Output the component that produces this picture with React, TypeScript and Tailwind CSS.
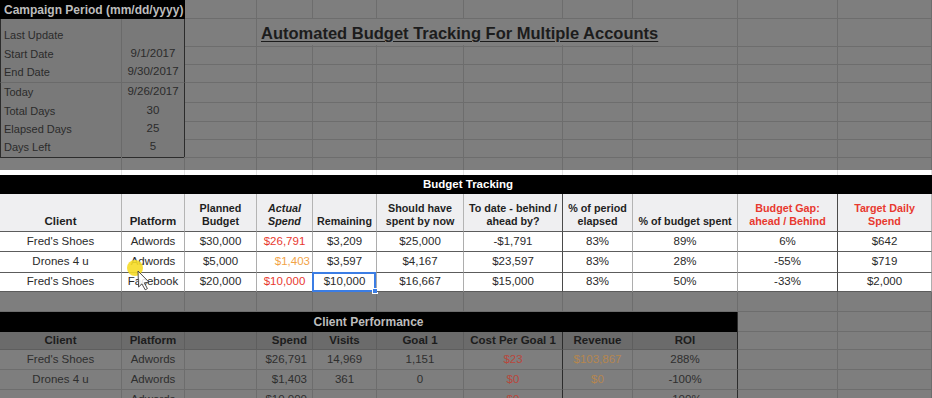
import type { ReactNode } from "react";

/*
  Google-Sheets style budget tracker. The active "Budget Tracking" block is
  shown at full brightness; the rest of the sheet is dimmed as in the video.
*/

const COLS =
  "grid grid-cols-[122px_63px_72px_56px_64px_87px_99px_70px_105px_100px_94px]";

// dimmed sheet gridline cell
const dimCell = "border-r border-b border-[#6d6d6d]";

function DimBlanks({ n }: { n: number }) {
  return (
    <>
      {Array.from({ length: n }, (_, i) => (
        <div key={i} className={dimCell} />
      ))}
    </>
  );
}

const CAMPAIGN: { label: string; value: string; h: string }[] = [
  { label: "Last Update", value: "", h: "h-[26px]" },
  { label: "Start Date", value: "9/1/2017", h: "h-[18px]" },
  { label: "End Date", value: "9/30/2017", h: "h-[20px]" },
  { label: "Today", value: "9/26/2017", h: "h-[19px]" },
  { label: "Total Days", value: "30", h: "h-[18px]" },
  { label: "Elapsed Days", value: "25", h: "h-[18px]" },
  { label: "Days Left", value: "5", h: "h-[19px]" },
];

const RED = "text-[#e8392f]";
const DARK_R = "border-r-[#4a4a4a]";

const BT_HEAD: { label: ReactNode; cls?: string }[] = [
  { label: "Client", cls: "text-[11.5px]" },
  { label: "Platform", cls: "text-[11.5px]" },
  { label: <>Planned<br />Budget</> },
  { label: <>Actual<br />Spend</>, cls: "italic" },
  { label: "Remaining" },
  { label: <>Should have<br />spent by now</> },
  { label: <>To date - behind /<br />ahead by?</>, cls: DARK_R },
  { label: <>% of period<br />elapsed</> },
  { label: "% of budget spent" },
  { label: <>Budget Gap:<br />ahead / Behind</>, cls: `${RED} ${DARK_R}` },
  { label: <>Target Daily<br />Spend</>, cls: RED },
];

type Val = { v: string; cls?: string };

const BT_ROWS: { h: string; cells: Val[] }[] = [
  {
    h: "h-[20px]",
    cells: [
      { v: "Fred's Shoes" }, { v: "Adwords" }, { v: "$30,000" },
      { v: "$26,791", cls: RED }, { v: "$3,209" }, { v: "$25,000" },
      { v: "-$1,791" }, { v: "83%" }, { v: "89%" }, { v: "6%" }, { v: "$642" },
    ],
  },
  {
    h: "h-[21px]",
    cells: [
      { v: "Drones 4 u" }, { v: "Adwords" }, { v: "$5,000" },
      { v: "$1,403", cls: "text-[#f2a348] !justify-end pr-[2px]" },
      { v: "$3,597" }, { v: "$4,167" }, { v: "$23,597" }, { v: "83%" },
      { v: "28%" }, { v: "-55%" }, { v: "$719" },
    ],
  },
  {
    h: "h-[19px]",
    cells: [
      { v: "Fred's Shoes" }, { v: "Facebook" }, { v: "$20,000" },
      { v: "$10,000", cls: RED }, { v: "$10,000" }, { v: "$16,667" },
      { v: "$15,000" }, { v: "83%" }, { v: "50%" }, { v: "-33%" }, { v: "$2,000" },
    ],
  },
];

const CP_RED = "text-[#b9473c]";
const CP_ORANGE = "text-[#b5864f]";
const CP_DARK = "border-r-[#2c2c2c]";

const CP_HEAD: { label: string; cls?: string }[] = [
  { label: "Client" },
  { label: "Platform" },
  { label: "" },
  { label: "Spend", cls: "!justify-end pr-[5px]" },
  { label: "Visits" },
  { label: "Goal 1" },
  { label: "Cost Per Goal 1", cls: CP_DARK },
  { label: "Revenue" },
  { label: "ROI", cls: CP_DARK },
];

const CP_ROWS: Val[][] = [
  [
    { v: "Fred's Shoes" }, { v: "Adwords" }, { v: "" },
    { v: "$26,791", cls: "!justify-end pr-[5px]" }, { v: "14,969" },
    { v: "1,151" }, { v: "$23", cls: `${CP_RED} ${CP_DARK}` },
    { v: "$103,867", cls: CP_ORANGE }, { v: "288%", cls: CP_DARK },
  ],
  [
    { v: "Drones 4 u" }, { v: "Adwords" }, { v: "" },
    { v: "$1,403", cls: "!justify-end pr-[5px]" }, { v: "361" },
    { v: "0" }, { v: "$0", cls: `${CP_RED} ${CP_DARK}` },
    { v: "$0", cls: CP_ORANGE }, { v: "-100%", cls: CP_DARK },
  ],
  [
    { v: "" }, { v: "Adwords" }, { v: "" },
    { v: "$10,000", cls: "!justify-end pr-[5px]" }, { v: "" },
    { v: "" }, { v: "$0", cls: `${CP_RED} ${CP_DARK}` },
    { v: "" }, { v: "-100%", cls: CP_DARK },
  ],
];

// screen-recording mouse pointer with its yellow click halo
function Cursor() {
  return (
    <svg
      className="pointer-events-none absolute left-[127px] top-[84px]"
      width="28"
      height="38"
      viewBox="0 0 28 38"
      aria-hidden
    >
      <circle cx="8" cy="14" r="8" fill="#f6dc26" fillOpacity="0.9" />
      <path
        d="M11 17 L11.6 33 L14.9 29.9 L18.2 35.8 L20.4 34.6 L17.3 28.8 L22 28.2 Z"
        fill="#fff"
        fillOpacity="0.85"
        stroke="#3a3a3a"
        strokeWidth="0.9"
        strokeLinejoin="round"
      />
    </svg>
  );
}

export default function App() {
  return (
    <div className="h-[398px] w-[932px] overflow-hidden bg-[#7e7e7e] font-['Liberation_Sans',Arial,sans-serif] text-[#2a2a2a]">
      {/* top, dimmed: campaign period + title */}
      <div className="text-[11px]">
        <div className={`${COLS} h-[19px]`}>
          <div className="col-span-2 flex items-center bg-black pl-[4px] text-[12px] font-bold whitespace-nowrap text-[#bdbdbd]">
            Campaign Period (mm/dd/yyyy)
          </div>
          <DimBlanks n={9} />
        </div>
        {CAMPAIGN.map((r, i) => (
          <div key={r.label} className={`${COLS} ${r.h}`}>
            <div
              className={`flex items-end border-r border-b border-l border-[#6a6a6a] border-l-[#2c2c2c] bg-[#797979] pb-[2px] pl-[3px] text-[#2b2b2b] ${
                i === CAMPAIGN.length - 1 ? "border-b-[#2c2c2c]" : ""
              }`}
            >
              {r.label}
            </div>
            <div
              className={`flex items-end justify-center border-r border-b border-[#6a6a6a] border-r-[#2c2c2c] bg-[#797979] pb-[2px] text-[11.5px] text-[#2b2b2b] ${
                i === CAMPAIGN.length - 1 ? "border-b-[#2c2c2c]" : ""
              }`}
            >
              {r.value}
            </div>
            <div className={dimCell} />
            {i === 0 ? (
              <>
                <div className="col-span-6 flex items-center border-r border-b border-[#6d6d6d] pl-[4px] pt-[2px] text-[16.5px] font-bold whitespace-nowrap text-[#1c1c1c] underline decoration-1 underline-offset-2">
                  Automated Budget Tracking For Multiple Accounts
                </div>
                <DimBlanks n={2} />
              </>
            ) : (
              <DimBlanks n={8} />
            )}
          </div>
        ))}
        <div className={`${COLS} h-[13px]`}>
          {Array.from({ length: 11 }, (_, i) => (
            <div key={i} className="border-r border-[#6d6d6d]" />
          ))}
        </div>
      </div>

      {/* middle, highlighted: Budget Tracking */}
      <div className="relative bg-white text-[11.5px] text-[#2a2a2a]">
        <div className={`${COLS} h-[5px]`}>
          {Array.from({ length: 11 }, (_, i) => (
            <div key={i} className="border-r border-[#e3e3e3]" />
          ))}
        </div>
        <div className={`${COLS} h-[19px]`}>
          <div className="col-span-11 flex items-center justify-center bg-black pl-[4px] font-bold text-white">
            Budget Tracking
          </div>
        </div>
        <div className={`${COLS} h-[38px]`}>
          {BT_HEAD.map((c, i) => (
            <div
              key={i}
              className={`flex flex-col items-center justify-end border-r border-b border-[#b4b4b4] border-b-[#5c5c5c] bg-[#efeff1] pb-[3px] text-center text-[10.75px] leading-[13px] font-bold whitespace-nowrap text-[#1f1f1f] ${c.cls ?? ""}`}
            >
              <span>{c.label}</span>
            </div>
          ))}
        </div>
        {BT_ROWS.map((r, ri) => (
          <div key={ri} className={`${COLS} ${r.h}`}>
            {r.cells.map((c, ci) => (
              <div
                key={ci}
                className={`relative flex items-center justify-center border-r border-b border-[#adadad] border-b-[#5c5c5c] whitespace-nowrap ${
                  ci === 6 || ci === 9 ? DARK_R : ""
                } ${c.cls ?? ""}`}
              >
                {c.v}
                {ri === 2 && ci === 4 && (
                  <span className="pointer-events-none absolute -top-[1px] -left-[1px] h-[20px] w-[64px] border-2 border-[#3b7de4]">
                    <span className="absolute -right-[4px] -bottom-[4px] h-[6px] w-[6px] border border-white bg-[#3b7de4]" />
                  </span>
                )}
              </div>
            ))}
          </div>
        ))}
        <Cursor />
      </div>

      {/* bottom, dimmed: Client Performance */}
      <div className="text-[11.5px]">
        <div className={`${COLS} h-[20px]`}>
          <DimBlanks n={11} />
        </div>
        <div className={`${COLS} h-[20px]`}>
          <div className="col-span-9 flex items-center justify-center border-r border-[#2c2c2c] bg-black text-[12px] font-bold text-[#bdbdbd]">
            Client Performance
          </div>
          <DimBlanks n={2} />
        </div>
        <div className={`${COLS} h-[18px]`}>
          {CP_HEAD.map((c, i) => (
            <div
              key={i}
              className={`flex items-center justify-center border-r border-b border-[#5e5e5e] bg-[#6b6b6b] font-bold whitespace-nowrap text-[#1c1c1c] ${c.cls ?? ""}`}
            >
              {c.label}
            </div>
          ))}
          <DimBlanks n={2} />
        </div>
        {CP_ROWS.map((r, ri) => (
          <div key={ri} className={`${COLS} h-[20px]`}>
            {r.map((c, ci) => (
              <div
                key={ci}
                className={`flex items-center justify-center border-r border-b border-[#6d6d6d] whitespace-nowrap text-[#2e2e2e] ${c.cls ?? ""}`}
              >
                {c.v}
              </div>
            ))}
            <DimBlanks n={2} />
          </div>
        ))}
      </div>
    </div>
  );
}
